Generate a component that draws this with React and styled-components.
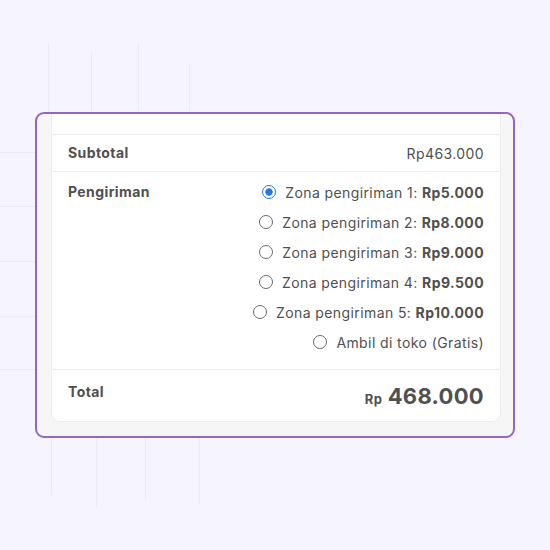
import React from 'react'
import styled, { createGlobalStyle } from 'styled-components'

const GlobalStyle = createGlobalStyle`
  html, body {
    margin: 0;
    padding: 0;
    background: #f6f4ff;
  }
  * { box-sizing: border-box; }
`;

const options = [
  { label: 'Zona pengiriman 1: ', price: 'Rp5.000', checked: true },
  { label: 'Zona pengiriman 2: ', price: 'Rp8.000' },
  { label: 'Zona pengiriman 3: ', price: 'Rp9.000' },
  { label: 'Zona pengiriman 4: ', price: 'Rp9.500' },
  { label: 'Zona pengiriman 5: ', price: 'Rp10.000' },
  { label: 'Ambil di toko (Gratis)' },
];

const Backdrop = () => (
  <Lines width="550" height="550" viewBox="0 0 550 550">
    <g stroke="#ebe8f8" strokeWidth="1">
      <line x1="48.5" y1="43" x2="48.5" y2="112" />
      <line x1="91.5" y1="52" x2="91.5" y2="112" />
      <line x1="138.5" y1="43" x2="138.5" y2="112" />
      <line x1="189.5" y1="63" x2="189.5" y2="112" />
      <line x1="51.5" y1="437" x2="51.5" y2="495" />
      <line x1="96.5" y1="437" x2="96.5" y2="507" />
      <line x1="145.5" y1="437" x2="145.5" y2="500" />
      <line x1="199.5" y1="437" x2="199.5" y2="505" />
      <line x1="0" y1="152.5" x2="35" y2="152.5" />
      <line x1="0" y1="206.5" x2="35" y2="206.5" />
      <line x1="0" y1="261.5" x2="35" y2="261.5" />
      <line x1="0" y1="316.5" x2="35" y2="316.5" />
      <line x1="0" y1="369.5" x2="35" y2="369.5" />
    </g>
  </Lines>
);

const App = () => {
  return (
    <Page>
      <GlobalStyle />
      <Backdrop />
      <Frame>
        <Card>
          <TopSpacer />
          <Row>
            <Label>Subtotal</Label>
            <Value>Rp463.000</Value>
          </Row>
          <ShippingRow>
            <Label>Pengiriman</Label>
            <OptionList>
              {options.map((o) => (
                <Option key={o.label}>
                  <Radio checked={o.checked} />
                  <span>
                    {o.label}
                    {o.price && <b>{o.price}</b>}
                  </span>
                </Option>
              ))}
            </OptionList>
          </ShippingRow>
          <TotalRow>
            <Label>Total</Label>
            <Amount>
              <small>Rp</small> 468.000
            </Amount>
          </TotalRow>
        </Card>
      </Frame>
    </Page>
  );
}

const Page = styled.div`
  position: relative;
  width: 550px;
  height: 550px;
  padding: 112px 0 0 35px;
  font-family: Inter, "Liberation Sans", Arial, sans-serif;
  color: #505050;
`;

const Lines = styled.svg`
  position: absolute;
  left: 0;
  top: 0;
`;

const Frame = styled.div`
  position: relative;
  width: 480px;
  height: 326px;
  border: 2px solid #9366c6;
  border-radius: 9px;
  background: #f6f6f6;
  padding: 0 12px 14px 14px;
  overflow: hidden;
`;

const Card = styled.div`
  height: 100%;
  background: #fff;
  border: 1px solid #ededed;
  border-top: none;
  border-radius: 0 0 9px 9px;
  display: flex;
  flex-direction: column;
`;

const TopSpacer = styled.div`
  height: 21px;
  border-bottom: 1px solid #eeeeee;
`;

const Row = styled.div`
  display: flex;
  justify-content: space-between;
  align-items: center;
  height: 37px;
  padding: 0 16px;
  border-bottom: 1px solid #eeeeee;
  font-size: 14px;
  letter-spacing: 0.4px;
`;

const ShippingRow = styled(Row)`
  align-items: flex-start;
  height: 198px;
  padding-top: 5px;
`;

const TotalRow = styled(Row)`
  flex: 1;
  border-bottom: none;
  align-items: flex-start;
  padding-top: 7px;
`;

const Label = styled.div`
  font-weight: 700;
  line-height: 30px;
  color: #505050;
`;

const Value = styled.div`
  color: #505050;
`;

const OptionList = styled.div`
  display: flex;
  flex-direction: column;
  align-items: flex-end;
`;

const Option = styled.label`
  display: flex;
  align-items: center;
  gap: 9px;
  height: 30px;
  color: #505050;
  b { font-weight: 700; }
`;

const Radio = styled.span`
  width: 14px;
  height: 14px;
  border-radius: 50%;
  flex-shrink: 0;
  border: 1.8px solid ${({ checked }) => (checked ? '#1f78ee' : '#6a6a6a')};
  background: ${({ checked }) =>
    checked ? 'radial-gradient(circle, #1f78ee 0 3.4px, #fff 3.9px)' : '#fff'};
`;

const Amount = styled.div`
  font-weight: 700;
  font-size: 22px;
  line-height: 38px;
  letter-spacing: 0.3px;
  color: #505050;
  small {
    font-size: 13px;
  }
`;

export default App
